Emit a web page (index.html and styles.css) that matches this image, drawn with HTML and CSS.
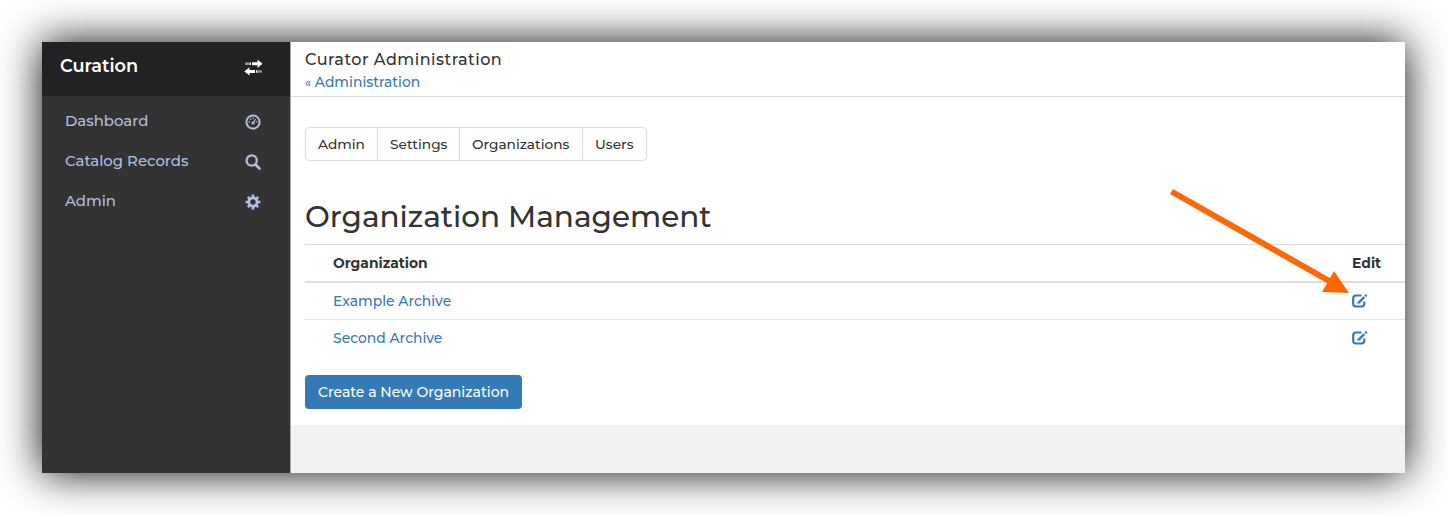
FILE: index.html
```html
<!DOCTYPE html>
<html lang="en">
<head>
<meta charset="utf-8">
<title>Curator Administration</title>
<link rel="stylesheet" href="styles.css">
</head>
<body>
<div class="window">
  <nav class="sidebar">
    <div class="brand">
      <span class="brand-name">Curation</span>
      <svg class="brand-icon" width="19" height="17" viewBox="0 0 19 17" fill="#fff"><path d="M1.500 3.500h1v2.500h-1zM3.500 3.500h1v2.500h-1zM5.500 3.500h1.500v2.500H5.500zM8 3.300h5.500V.5L18.500 4.700 13.500 8.900V6.200H8zM11 11v2.900H5.500v2.600L.3 12.400 5.500 8.300V11zM12 11.200h1.500v2.500H12zM14.500 11.200h1v2.500h-1zM16.500 11.200h1v2.500h-1z"/></svg>
    </div>
    <ul class="menu">
      <li class="menu-item"><a class="menu-dashboard">Dashboard</a>
        <svg width="16" height="16" viewBox="0 0 16 16" fill="#b1bfe1"><circle cx="8" cy="8" r="6.600" fill="none" stroke="#b1bfe1" stroke-width="2"/><circle cx="8" cy="9" r="1.500"/><path d="M8 8.500l2-4 .8.400-1.500 4z"/><circle cx="4.200" cy="7.700" r=".8"/><circle cx="5.600" cy="5.200" r=".8"/><circle cx="8" cy="4.300" r=".8"/><circle cx="11.800" cy="7.700" r=".8"/></svg></li>
      <li class="menu-item"><a class="menu-catalog">Catalog Records</a>
        <svg width="16" height="16" viewBox="0 0 16 16" fill="none" stroke="#b1bfe1"><circle cx="6.700" cy="6.500" r="5.100" stroke-width="2.200"/><path d="M10.500 10.500l4 4" stroke-width="2.700" stroke-linecap="round"/></svg></li>
      <li class="menu-item"><a class="menu-admin">Admin</a>
        <svg width="16" height="16" viewBox="0 0 16 16" fill="none" stroke="#b1bfe1"><circle cx="8" cy="8" r="4.100" stroke-width="2.800"/><path d="M8 .6v2.800M8 12.600v2.800M.6 8h2.800M12.600 8h2.800M2.800 2.800l2 2M11.200 11.200l2 2M13.200 2.800l-2 2M4.800 11.200l-2 2" stroke-width="2.600"/></svg></li>
    </ul>
  </nav>
  <div class="main">
    <header class="page-header">
      <div class="page-title">Curator Administration</div>
      <a class="back-link"><span class="laquo">«</span> Administration</a>
    </header>
    <main class="content">
      <div class="tabs">
        <a class="tab tab-admin">Admin</a><a class="tab tab-settings">Settings</a><a class="tab tab-organizations">Organizations</a><a class="tab tab-users">Users</a>
      </div>
      <h1 class="heading">Organization Management</h1>
      <div class="table">
        <div class="row row-head"><span class="col-head">Organization</span><span class="col-edit">Edit</span></div>
        <div class="row"><a class="org-link">Example Archive</a><span class="col-edit"><svg class="edit-icon" width="16" height="14" viewBox="0 0 16 14" fill="none" stroke="#337ab7"><path d="M9.500 1.500H4Q1.200 1.500 1.200 4.300v5.500q0 2.700 2.800 2.700h5.500q2.800 0 2.800-2.700V7.500" stroke-width="2.200"/><path d="M7 8.300L12.300 3" stroke-width="2.400"/><path d="M5.200 10l.7-3.100 2.400 2.400z" fill="#337ab7" stroke="none"/><path d="M13.200 2.100l1.300-1.300" stroke-width="2.400"/></svg></span></div>
        <div class="row row-last"><a class="org-link">Second Archive</a><span class="col-edit"><svg class="edit-icon" width="16" height="14" viewBox="0 0 16 14" fill="none" stroke="#337ab7"><path d="M9.500 1.500H4Q1.200 1.500 1.200 4.300v5.500q0 2.700 2.800 2.700h5.500q2.800 0 2.800-2.700V7.500" stroke-width="2.200"/><path d="M7 8.300L12.300 3" stroke-width="2.400"/><path d="M5.200 10l.7-3.100 2.400 2.400z" fill="#337ab7" stroke="none"/><path d="M13.200 2.100l1.300-1.300" stroke-width="2.400"/></svg></span></div>
      </div>
      <a class="create">Create a New Organization</a>
    </main>
  </div>
  <svg class="pointer" width="182" height="108" viewBox="0 0 182 108"><path d="M2.500 3.500L162 94" stroke="#ff6700" stroke-width="6"/><path d="M180 105L165 83 153 104z" fill="#ff6700"/></svg>
</div>
</body>
</html>
```
FILE: styles.css
```css
* { box-sizing: border-box; }
body {
  margin: 0;
  padding: 42px;
  height: 515px;
  overflow: hidden;
  background: #fff;
  color: #333;
  font: 500 13.9px/20px Montserrat, Inter, sans-serif;
  white-space: nowrap;
}
svg { display: block; flex: none; }
.window {
  position: relative;
  display: flex;
  width: 1363px;
  height: 431px;
  box-shadow: 0 0 40px rgba(0, 0, 0, .96);
}
.sidebar { width: 248px; background: #333; }
.brand {
  display: flex;
  align-items: center;
  justify-content: space-between;
  height: 54px;
  padding: 0 27px 6px 18px;
  background: #222;
  color: #fff;
  font-size: 17.7px;
  font-weight: 600;
}
.brand-icon { margin-top: 2px; }
.menu { list-style: none; margin: 0; padding: 5px 29px 0 23px; }
.menu-item {
  display: flex;
  align-items: center;
  justify-content: space-between;
  height: 40px;
  color: #b1bfe1;
  font-size: 14.9px;
}
.menu-item svg { margin-top: 2px; }
.main { flex: 1; background: #f2f2f2; border-left: 1px solid #aaa; }
.page-header {
  height: 55px;
  padding: 7px 14px;
  border-bottom: 1px solid #ddd;
  background: #fff;
}
.page-title { font-size: 16px; line-height: 22px; letter-spacing: .5px; }
.back-link { display: block; line-height: 22px; color: #337ab7; }
.laquo { font-size: 12px; }
.content { height: 328px; padding: 30px 0 0 14px; background: #fff; }
.tabs {
  display: flex;
  width: 342px;
  height: 34px;
  border: 1px solid #ddd;
  border-radius: 4px;
  font-size: 13.7px;
}
.tab { padding: 6px 12px; border-right: 1px solid #ddd; }
.tab:last-child { border-right: 0; }
.tab-admin { width: 72px; }
.tab-settings { width: 82px; }
.tab-organizations { width: 123px; }
.heading { margin: 35px 0 8px; font-size: 29.5px; line-height: 40px; font-weight: 500; }
.table { border-top: 1px solid #ddd; }
.row {
  display: flex;
  justify-content: space-between;
  align-items: center;
  height: 37px;
  padding: 0 0 1px 28px;
  border-bottom: 1px solid #e4e4e4;
}
.row-head { height: 38px; border-bottom: 2px solid #ddd; font-weight: 700; }
.row-last { height: 36px; border-bottom: 0; }
.col-edit { width: 53px; }
.org-link { color: #337ab7; }
.create {
  display: block;
  width: 217px;
  height: 34px;
  margin-top: 19px;
  padding: 7px 13px;
  border-radius: 4px;
  background: #337ab7;
  color: #fff;
  font-size: 14px;
}
.pointer { position: absolute; left: 1127px; top: 146px; }
```
